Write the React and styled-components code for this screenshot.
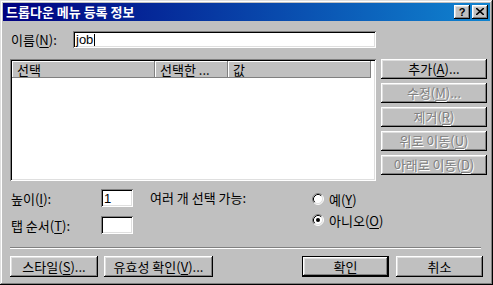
import React from 'react';
import styled, { createGlobalStyle, css } from 'styled-components';

const Global = createGlobalStyle`
  html, body { margin: 0; padding: 0; background: #c0c0c0; }
  body { font-family: "Noto Sans CJK KR", "Noto Sans", sans-serif; font-size: 13px; color: #000; }
  * { box-sizing: border-box; }
  u { text-decoration-thickness: 1px; text-underline-offset: 2px; }
`;

const raised = css`
  box-shadow: inset -1px -1px #000, inset 1px 1px #fff, inset -2px -2px #808080, inset 2px 2px #dfdfdf;
`;
const sunken = css`
  box-shadow: inset 1px 1px #808080, inset -1px -1px #fff, inset 2px 2px #000, inset -2px -2px #dfdfdf;
`;

const Window = styled.div`
  width: 493px;
  height: 285px;
  background: #c0c0c0;
  padding: 3px;
  display: flex;
  flex-direction: column;
  box-shadow: inset -1px -1px #000, inset 1px 1px #dfdfdf, inset -2px -2px #808080, inset 2px 2px #fff;
`;

const TitleBar = styled.div`
  height: 18px;
  display: flex;
  align-items: center;
  padding: 0 2px 0 3px;
  background: linear-gradient(90deg, #000080, #1084d0);
  color: #fff;
  font-weight: 700;
  font-size: 13px;
`;

const TitleText = styled.div`
  flex: 1;
  line-height: 18px;
  white-space: nowrap;
`;

const TitleButtons = styled.div`
  display: flex;
  gap: 2px;
`;

const TitleButton = styled.div`
  width: 16px;
  height: 14px;
  background: #c0c0c0;
  ${raised};
  display: flex;
  align-items: center;
  justify-content: center;
  color: #000;
  font-family: "Liberation Sans", sans-serif;
  font-weight: 700;
  font-size: 11px;
  line-height: 14px;
  padding-bottom: 1px;
`;

const Content = styled.div`
  padding: 10px 0 0 7px;
  display: flex;
  flex-direction: column;
`;

const NameRow = styled.div`
  display: flex;
  align-items: center;
  height: 17px;
`;

const Label = styled.div`
  width: ${p => p.$w}px;
  padding-left: 1px;
  white-space: nowrap;
  line-height: 17px;
`;

const TextInput = styled.div`
  width: ${p => p.$w}px;
  height: ${p => p.$h}px;
  background: #fff;
  ${sunken};
  padding: 0 3px;
  display: flex;
  align-items: center;
  font-family: "Liberation Sans", "Noto Sans CJK KR", sans-serif;
  font-size: 13px;
`;

const Caret = styled.span`
  display: inline-block;
  width: 1px;
  height: 12px;
  background: #000;
  margin-left: 1px;
`;

const Main = styled.div`
  display: flex;
  gap: 5px;
  margin-top: 11px;
`;

const List = styled.div`
  width: 366px;
  height: 122px;
  background: #fff;
  ${sunken};
  padding: 2px;
`;

const ListHeader = styled.div`
  display: flex;
  height: 17px;
`;

const HeaderCell = styled.div`
  width: ${p => p.$w}px;
  background: #c0c0c0;
  box-shadow: inset -1px -1px #808080, inset 1px 1px #fff;
  padding-left: 5px;
  display: flex;
  align-items: center;
  white-space: nowrap;
`;

const ButtonColumn = styled.div`
  display: flex;
  flex-direction: column;
  gap: 4px;
  width: 106px;
`;

const Button = styled.div`
  width: ${p => (p.$w ? `${p.$w}px` : '100%')};
  height: ${p => p.$h || 20}px;
  background: #c0c0c0;
  ${p => p.$default
    ? css`box-shadow: inset 0 0 0 1px #000, inset -2px -2px #000, inset 2px 2px #fff, inset -3px -3px #808080, inset 3px 3px #dfdfdf;`
    : raised};
  display: flex;
  align-items: center;
  justify-content: center;
  white-space: nowrap;
  color: ${p => (p.$disabled ? '#808080' : '#000')};
  text-shadow: ${p => (p.$disabled ? '1px 1px 0 #fff' : 'none')};
  line-height: 1;
  padding-bottom: 1px;
`;

const Bottom = styled.div`
  display: flex;
  margin-top: 8px;
`;

const Fields = styled.div`
  display: flex;
  flex-direction: column;
  gap: 9px;
`;

const FieldRow = styled.div`
  display: flex;
  align-items: center;
  height: 18px;
`;

const MultiLabel = styled.div`
  margin-left: 17px;
  width: 162px;
  line-height: 18px;
  white-space: nowrap;
`;

const RadioGroup = styled.div`
  display: flex;
  flex-direction: column;
  gap: 5px;
  padding-top: 2px;
`;

const RadioRow = styled.div`
  display: flex;
  align-items: center;
  gap: 5px;
  height: 16px;
  white-space: nowrap;
`;

const Separator = styled.div`
  width: 471px;
  height: 2px;
  margin-top: 13px;
  border-top: 1px solid #808080;
  border-bottom: 1px solid #fff;
`;

const ButtonRow = styled.div`
  display: flex;
  justify-content: space-between;
  width: 473px;
  margin-top: 7px;
`;

const ButtonGroup = styled.div`
  display: flex;
  gap: ${p => p.$gap}px;
`;

const Radio = ({ checked }) => (
  <svg width="12" height="12" viewBox="0 0 12 12">
    <circle cx="6" cy="6" r="5" fill="#fff" />
    <path d="M9.89 2.11 A5.5 5.5 0 0 0 2.11 9.89" stroke="#808080" fill="none" />
    <path d="M2.11 9.89 A5.5 5.5 0 0 0 9.89 2.11" stroke="#fff" fill="none" />
    <path d="M9.18 2.82 A4.5 4.5 0 0 0 2.82 9.18" stroke="#000" fill="none" />
    <path d="M2.82 9.18 A4.5 4.5 0 0 0 9.18 2.82" stroke="#dfdfdf" fill="none" />
    {checked && <circle cx="6" cy="6" r="2" fill="#000" />}
  </svg>
);

export default function App() {
  return (
    <>
      <Global />
      <Window>
        <TitleBar>
          <TitleText>드롭다운 메뉴 등록 정보</TitleText>
          <TitleButtons>
            <TitleButton>?</TitleButton>
            <TitleButton>
              <svg width="8" height="7" viewBox="0 0 8 7">
                <path d="M0 0 L8 7 M8 0 L0 7" stroke="#000" strokeWidth="1.6" />
              </svg>
            </TitleButton>
          </TitleButtons>
        </TitleBar>
        <Content>
          <NameRow>
            <Label $w={63}>이름(<u>N</u>):</Label>
            <TextInput $w={303} $h={17}>job<Caret /></TextInput>
          </NameRow>
          <Main>
            <List>
              <ListHeader>
                <HeaderCell $w={143}>선택</HeaderCell>
                <HeaderCell $w={73}>선택한 ...</HeaderCell>
                <HeaderCell $w={143}>값</HeaderCell>
              </ListHeader>
            </List>
            <ButtonColumn>
              <Button>추가(<u>A</u>)...</Button>
              <Button $disabled>수정(<u>M</u>)...</Button>
              <Button $disabled>제거(<u>R</u>)</Button>
              <Button $disabled>위로 이동(<u>U</u>)</Button>
              <Button $disabled>아래로 이동(<u>D</u>)</Button>
            </ButtonColumn>
          </Main>
          <Bottom>
            <Fields>
              <FieldRow>
                <Label $w={91}>높이(<u>I</u>):</Label>
                <TextInput $w={32} $h={18}>1</TextInput>
              </FieldRow>
              <FieldRow>
                <Label $w={91}>탭 순서(<u>T</u>):</Label>
                <TextInput $w={32} $h={18} />
              </FieldRow>
            </Fields>
            <MultiLabel>여러 개 선택 가능:</MultiLabel>
            <RadioGroup>
              <RadioRow><Radio /><span>예(<u>Y</u>)</span></RadioRow>
              <RadioRow><Radio checked /><span>아니오(<u>O</u>)</span></RadioRow>
            </RadioGroup>
          </Bottom>
          <Separator />
          <ButtonRow>
            <ButtonGroup $gap={6}>
              <Button $w={88} $h={21}>스타일(<u>S</u>)...</Button>
              <Button $w={109} $h={21}>유효성 확인(<u>V</u>)...</Button>
            </ButtonGroup>
            <ButtonGroup $gap={7}>
              <Button $w={87} $h={21} $default>확인</Button>
              <Button $w={87} $h={21}>취소</Button>
            </ButtonGroup>
          </ButtonRow>
        </Content>
      </Window>
    </>
  );
}
